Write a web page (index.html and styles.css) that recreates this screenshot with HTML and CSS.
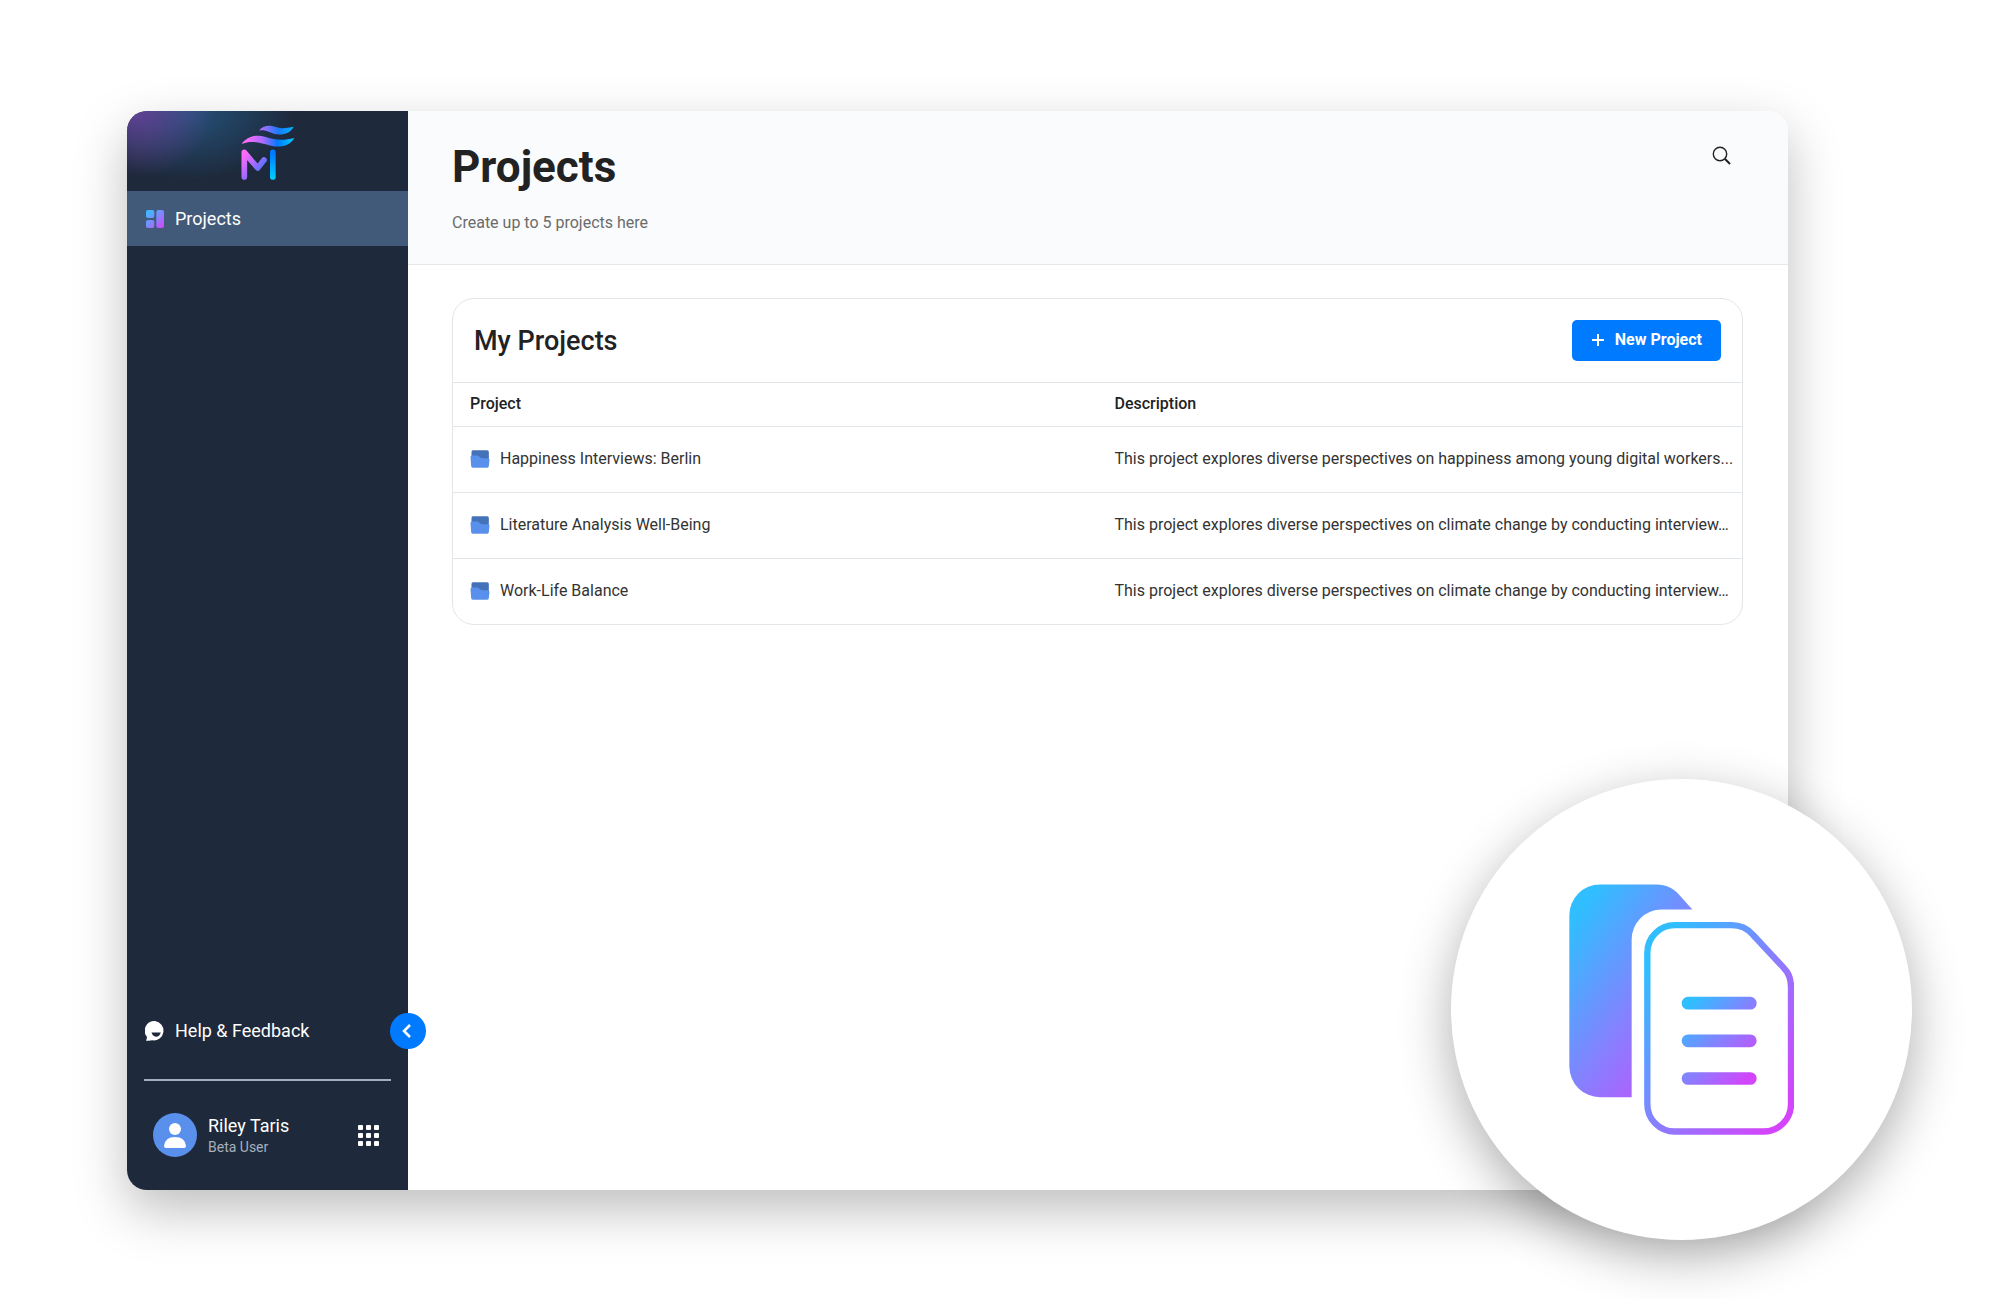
FILE: index.html
```html
<!DOCTYPE html>
<html lang="en">
<head>
<meta charset="utf-8">
<title>Projects</title>
<meta name="viewport" content="width=device-width, initial-scale=1">
<link rel="stylesheet" href="styles.css">
</head>
<body>
<svg class="defs" width="0" height="0" aria-hidden="true">
  <defs>
    <symbol id="folder" viewBox="0 0 60 55">
      <path fill="#4472b8" d="M8 1H52Q57 1 57 6V30H4V6Q4 1 8 1Z"/>
      <path fill="#5990ec" d="M5 17H20Q25 17 28 21Q32 25 37 25H54Q59 25 59 30L57 49Q57 54 52 54H8Q3 54 3 49L1 22Q1 17 5 17Z"/>
    </symbol>
  </defs>
</svg>
<div class="window">
  <aside class="sidebar">
    <div class="brand">
      <svg class="logo" viewBox="364 73 162 165" role="img" aria-label="Logo">
        <defs>
          <linearGradient id="wave" gradientUnits="userSpaceOnUse" x1="366" y1="0" x2="524" y2="0">
            <stop offset="0.1" stop-color="#ff6bfb"/><stop offset="0.42" stop-color="#a36bff"/><stop offset="0.68" stop-color="#007aff"/><stop offset="1" stop-color="#00ccff"/>
          </linearGradient>
          <linearGradient id="wave2" gradientUnits="userSpaceOnUse" x1="418" y1="0" x2="522" y2="0">
            <stop offset="0" stop-color="#c96bff"/><stop offset="0.55" stop-color="#1a7aff"/><stop offset="1" stop-color="#00b4ff"/>
          </linearGradient>
          <linearGradient id="stem" gradientUnits="userSpaceOnUse" x1="372" y1="165" x2="440" y2="215">
            <stop offset="0" stop-color="#ff6bfb"/><stop offset="0.5" stop-color="#9b6bff"/><stop offset="1" stop-color="#2b7aff"/>
          </linearGradient>
          <linearGradient id="bar" gradientUnits="userSpaceOnUse" x1="0" y1="160" x2="0" y2="232">
            <stop offset="0" stop-color="#007aff"/><stop offset="1" stop-color="#00ccff"/>
          </linearGradient>
        </defs>
        <path fill="url(#wave2)" d="M418 90C430 72 452 72 472 80C490 86 505 80 522 78C512 99 488 104 466 100C448 96 438 86 418 90Z"/>
        <path fill="url(#wave)" d="M366 130C384 105 412 101 438 109C472 120 492 119 524 112C508 138 482 141 454 135C422 127 396 117 366 130Z"/>
        <path fill="none" stroke="url(#stem)" stroke-width="17" stroke-linecap="round" stroke-linejoin="round" d="M374 229V155L414 202L433 178"/>
        <path fill="url(#bar)" d="M451 155a8 8 0 0 1 17 0V229a8 8 0 0 1-17 0Z"/>
      </svg>
    </div>
    <nav class="nav">
      <a class="side-link active" href="#">
        <svg class="side-icon" viewBox="0 0 54 54" aria-hidden="true">
          <defs><linearGradient id="tiles" gradientUnits="userSpaceOnUse" x1="0" y1="0" x2="54" y2="54">
            <stop offset="0.1" stop-color="#3fb8ff"/><stop offset="0.5" stop-color="#7f88ff"/><stop offset="0.95" stop-color="#d148ff"/></linearGradient></defs>
          <g fill="url(#tiles)"><rect width="25" height="24" rx="6"/><rect y="30" width="25" height="24" rx="6"/><rect x="31" width="23" height="54" rx="6"/></g>
        </svg>
        Projects
      </a>
    </nav>
    <div class="side-foot">
      <div class="help-row">
        <a class="side-link" href="#">
          <svg class="side-icon" viewBox="0 0 60 62" aria-hidden="true">
            <path fill="#fff" d="M30 0A30 30 0 1 1 22 60Q14 62 2 61Q5 57 5 49A30 30 0 0 1 30 0Z"/>
            <path fill="#1e293b" d="M19 36H48Q44 49 33 49Q23 48 19 36Z"/>
          </svg>
          Help &amp; Feedback
        </a>
        <button class="toggle" type="button" aria-label="Collapse sidebar">
          <svg width="12" height="16" viewBox="0 0 12 16" aria-hidden="true"><path d="M8 2L2 8L8 14" fill="none" stroke="#fff" stroke-width="2.6"/></svg>
        </button>
      </div>
      <hr class="rule">
      <div class="user">
        <svg class="avatar" viewBox="0 0 45 45" aria-hidden="true">
          <circle cx="22" cy="22" r="22" fill="#5990ec"/>
          <circle cx="22" cy="16" r="6" fill="#fff"/>
          <path fill="#fff" d="M11 33Q12 24 22 24Q32 24 33 33Q33 35 31 35H13Q11 35 11 33Z"/>
        </svg>
        <div class="who">
          <span class="name">Riley Taris</span>
          <span class="role">Beta User</span>
        </div>
        <button class="apps" type="button" aria-label="Apps">
          <svg width="21" height="21" viewBox="0 0 21 21" fill="#fff" aria-hidden="true">
            <rect width="5" height="5" rx="1"/><rect x="8" width="5" height="5" rx="1"/><rect x="16" width="5" height="5" rx="1"/>
            <rect y="8" width="5" height="5" rx="1"/><rect x="8" y="8" width="5" height="5" rx="1"/><rect x="16" y="8" width="5" height="5" rx="1"/>
            <rect y="16" width="5" height="5" rx="1"/><rect x="8" y="16" width="5" height="5" rx="1"/><rect x="16" y="16" width="5" height="5" rx="1"/>
          </svg>
        </button>
      </div>
    </div>
  </aside>
  <main class="main">
    <header class="page-head">
      <div>
        <h1>Projects</h1>
        <p class="subtitle">Create up to 5 projects here</p>
      </div>
      <button class="search" type="button" aria-label="Search">
        <svg width="20" height="20" viewBox="0 0 20 20" fill="none" stroke="#222" aria-hidden="true"><circle cx="8" cy="8" r="6.7" stroke-width="1.4"/><path d="M12.8 12.8L18 18" stroke-width="2"/></svg>
      </button>
    </header>
    <section class="card">
      <div class="card-head">
        <h2>My Projects</h2>
        <button class="new" type="button">
          <svg width="12" height="12" viewBox="0 0 12 12" aria-hidden="true"><path d="M6 0V12M0 6H12" stroke="#fff" stroke-width="2"/></svg>
          New Project
        </button>
      </div>
      <table>
        <thead><tr><th scope="col">Project</th><th scope="col">Description</th></tr></thead>
        <tbody>
          <tr><td><a class="project" href="#"><svg class="folder" aria-hidden="true"><use href="#folder"/></svg>Happiness Interviews: Berlin</a></td><td>This project explores diverse perspectives on happiness among young digital workers...</td></tr>
          <tr><td><a class="project" href="#"><svg class="folder" aria-hidden="true"><use href="#folder"/></svg>Literature Analysis Well-Being</a></td><td>This project explores diverse perspectives on climate change by conducting interview…</td></tr>
          <tr><td><a class="project" href="#"><svg class="folder" aria-hidden="true"><use href="#folder"/></svg>Work-Life Balance</a></td><td>This project explores diverse perspectives on climate change by conducting interview…</td></tr>
        </tbody>
      </table>
    </section>
  </main>
  <div class="badge">
    <svg width="225" height="251" viewBox="27 43 675 752" role="img" aria-label="Documents">
      <defs>
        <linearGradient id="g" x1="0" y1="0" x2="1" y2="1">
          <stop offset="0.1" stop-color="#30beff"/><stop offset="0.5" stop-color="#8581ff"/><stop offset="0.92" stop-color="#d444fb"/>
        </linearGradient>
        <linearGradient id="gBack" href="#g" gradientUnits="userSpaceOnUse" gradientTransform="matrix(450 0 0 639 28 43)"/>
        <linearGradient id="gLines" href="#g" gradientUnits="userSpaceOnUse" gradientTransform="matrix(225 0 0 264 365 381)"/>
      </defs>
      <path fill="url(#gBack)" d="M120 44H290C318 44 340 56 356 73L397 119H305A90 90 0 0 0 215 209V682H120A92 92 0 0 1 28 590V136A92 92 0 0 1 120 44Z"/>
      <path fill="none" stroke="url(#g)" stroke-width="19" d="M344 166H515C540 166 562 176 578 194L672 295C686 309 693 330 693 352V703A82 82 0 0 1 611 785H344A82 82 0 0 1 262 703V248A82 82 0 0 1 344 166Z"/>
      <g fill="url(#gLines)"><path d="M384 381H571A19 19 0 0 1 571 419H384A19 19 0 0 1 384 381ZM384 494H571A19 19 0 0 1 571 532H384A19 19 0 0 1 384 494ZM384 607H571A19 19 0 0 1 571 645H384A19 19 0 0 1 384 607Z"/></g>
    </svg>
  </div>
</div>
</body>
</html>
```
FILE: styles.css
```css
* { box-sizing: border-box; }

body {
  margin: 0;
  min-height: 100vh;
  padding: 111px 212px 109px 127px;
  display: flex;
  background: #fff;
  color: #222;
  font: 16px/20px Roboto, "Liberation Sans", sans-serif;
  overflow: hidden;
}

h1, h2, p { margin: 0; }
a { color: inherit; text-decoration: none; }
button { border: 0; padding: 0; background: none; font: inherit; cursor: pointer; }
svg { display: block; flex: none; }
.defs { position: absolute; }

.window {
  position: relative;
  flex: 1;
  display: flex;
  border-radius: 20px;
  background: #fff;
  box-shadow: 0 20px 52px rgba(0, 0, 0, .26);
}

/* Sidebar */
.sidebar {
  width: 281px;
  flex: none;
  display: flex;
  flex-direction: column;
  border-radius: 20px 0 0 20px;
  background: #1e293b;
  color: #fff;
}

.brand {
  height: 80px;
  padding-top: 3px;
  display: flex;
  align-items: center;
  justify-content: center;
  border-radius: 20px 0 0 0;
  background:
    radial-gradient(ellipse 76px 66px at 10px 0, rgba(124, 66, 170, .7), transparent),
    radial-gradient(ellipse 110px 70px at 60px 0, rgba(40, 100, 150, .7), transparent);
}
.logo { width: 54px; height: 55px; }

.side-link {
  height: 55px;
  padding-left: 18px;
  display: flex;
  align-items: center;
  gap: 10px;
  font-size: 18px;
}
.side-link.active { background: #425a7a; }
.side-icon { width: 20px; height: 20px; }
.active .side-icon { width: 18px; height: 18px; margin: 0 1px; }

.side-foot { margin-top: auto; padding-bottom: 32px; }
.help-row { position: relative; }
.toggle {
  position: absolute;
  top: 10px;
  right: -18px;
  width: 36px;
  height: 36px;
  display: flex;
  align-items: center;
  justify-content: center;
  border-radius: 50%;
  background: #007aff;
}
.rule { height: 2px; margin: 21px 17px 32px; border: 0; background: #a3afbf; }
.user { padding: 0 29px 0 26px; display: flex; align-items: center; }
.avatar { width: 45px; height: 45px; }
.who { flex: 1; margin-left: 10px; display: flex; flex-direction: column; }
.name { font-size: 18px; line-height: 22px; }
.role { font-size: 14px; color: #a8b0bc; }

/* Page */
.main { flex: 1; min-width: 0; }
.page-head {
  padding: 30px 56px 31px 44px;
  display: flex;
  justify-content: space-between;
  align-items: flex-start;
  border-bottom: 1px solid #e6e9ec;
  border-radius: 0 20px 0 0;
  background: #fafbfd;
}
h1 { font-size: 44px; line-height: 52px; font-weight: 700; }
.subtitle { margin-top: 20px; color: #6b6b6b; }
.search { margin-top: 5px; }

.card {
  margin: 33px 45px 0 44px;
  border: 1px solid #e3e6e8;
  border-radius: 22px;
}
.card-head {
  height: 83px;
  padding: 0 21px;
  display: flex;
  align-items: center;
  justify-content: space-between;
}
h2 { font-size: 27px; line-height: 32px; font-weight: 500; }
.new {
  height: 41px;
  padding: 0 19px 2px 20px;
  display: flex;
  align-items: center;
  gap: 11px;
  border-radius: 5px;
  background: #007aff;
  color: #fff;
  font-weight: 700;
}

table { width: 100%; table-layout: fixed; border-collapse: separate; border-spacing: 0; }
th, td {
  padding: 0 17px 2px;
  border-top: 1px solid #e3e6e8;
  text-align: left;
  white-space: nowrap;
}
th { height: 44px; font-weight: 500; }
td { height: 66px; color: #333; }
.project { display: flex; align-items: center; gap: 10px; }
.folder { width: 20px; height: 18px; }

/* Round emblem over the window corner */
.badge {
  position: absolute;
  right: -124px;
  bottom: -50px;
  width: 461px;
  height: 461px;
  display: flex;
  align-items: center;
  justify-content: center;
  border-radius: 50%;
  background: #fff;
  box-shadow: 0 16px 52px rgba(0, 0, 0, .32);
}
```
